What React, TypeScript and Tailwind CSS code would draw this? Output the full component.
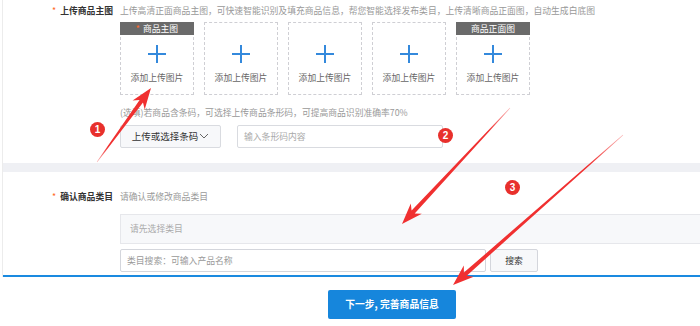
import React from "react";

type Pt = [number, number];

// build a tapered annotation arrow (thin tail, notched head)
function arrowPoints(tail: Pt, tip: Pt, headLen = 21, headHalf = 7.5, tailW = 0.6, neckW = 4.2) {
  const dx = tip[0] - tail[0];
  const dy = tip[1] - tail[1];
  const len = Math.hypot(dx, dy);
  const ux = dx / len;
  const uy = dy / len;
  const nx = -uy;
  const ny = ux;
  const bx = tip[0] - ux * headLen;
  const by = tip[1] - uy * headLen;
  const neckX = tip[0] - ux * headLen * 0.78;
  const neckY = tip[1] - uy * headLen * 0.78;
  const pts: Pt[] = [
    [tail[0] + (nx * tailW) / 2, tail[1] + (ny * tailW) / 2],
    [neckX + (nx * neckW) / 2, neckY + (ny * neckW) / 2],
    [bx + nx * headHalf, by + ny * headHalf],
    tip,
    [bx - nx * headHalf, by - ny * headHalf],
    [neckX - (nx * neckW) / 2, neckY - (ny * neckW) / 2],
    [tail[0] - (nx * tailW) / 2, tail[1] - (ny * tailW) / 2],
  ];
  return pts.map((p) => `${p[0].toFixed(1)},${p[1].toFixed(1)}`).join(" ");
}

const arrows: { id: string; tail: Pt; tip: Pt }[] = [
  { id: "a1", tail: [97, 162], tip: [151, 88] },
  { id: "a2", tail: [510, 108], tip: [402, 224] },
  { id: "a3", tail: [623, 135], tip: [453, 285] },
];

const badges = [
  { n: "1", cls: "left-[90px] top-[122px]" },
  { n: "2", cls: "left-[438px] top-[128px]" },
  { n: "3", cls: "left-[505px] top-[180px]" },
];

function Plus() {
  return (
    <svg width="20" height="20" viewBox="0 0 20 20">
      <path d="M10 1v18M1 10h18" stroke="#3489dc" strokeWidth="2" fill="none" />
    </svg>
  );
}

function UploadBox({ header, required }: { header?: string; required?: boolean }) {
  return (
    <div className="w-[74px] h-[73px] border border-dashed border-[#cfcfd4] flex flex-col items-center">
      <div className="h-[13px] w-[calc(100%+2px)] -mx-px -mt-px flex items-center justify-center">
        {header && (
          <div className="w-full h-[13px] bg-[#6a6a6a] text-white text-[8.8px] leading-[13px] text-center">
            {required && <span className="text-[#ff6a2a] mr-[3px]">*</span>}
            {header}
          </div>
        )}
      </div>
      <div className="mt-[9px]">
        <Plus />
      </div>
      <div className="mt-[8px] text-[8.8px] leading-[12px] text-[#666]">添加上传图片</div>
    </div>
  );
}

function Label({ children }: { children: React.ReactNode }) {
  return (
    <div className="w-[117px] shrink-0 text-right pr-[7px] text-[8.8px] leading-[13px] font-bold text-[#333]">
      <span className="text-[#ff6a2a] mr-[4px] font-normal">*</span>
      {children}
    </div>
  );
}

export default function App() {
  return (
    <div
      className="relative w-[700px] h-[326px] overflow-hidden bg-white"
      style={{ fontFamily: '"Noto Sans CJK SC", "Noto Sans", sans-serif' }}
    >
      <div className="ml-[2px] border-l border-[#ececec]">
        {/* upload section */}
        <div className="pt-[4px] pb-[15px]">
          <div className="flex">
            <Label>上传商品主图</Label>
            <div className="flex-1">
              <p className="text-[8.8px] leading-[13px] text-[#999] whitespace-nowrap">
                上传高清正面商品主图，可快速智能识别及填充商品信息，帮您智能选择发布类目，上传清晰商品正面图，自动生成白底图
              </p>
              <div className="mt-[5px] flex gap-[10px]">
                <UploadBox header="商品主图" required />
                <UploadBox />
                <UploadBox />
                <UploadBox />
                <UploadBox header="商品正面图" />
              </div>
              <p className="mt-[11px] text-[8.8px] leading-[13px] text-[#999] whitespace-nowrap">
                (选填)若商品含条码，可选择上传商品条形码，可提高商品识别准确率70%
              </p>
              <div className="mt-[6px] flex gap-[16px]">
                <button className="w-[101px] h-[23px] bg-[#f7f8fa] border border-[#d9dbe0] rounded-[2px] text-[9.5px] text-[#333] flex items-center justify-center">
                  上传或选择条码
                  <svg width="10" height="7" viewBox="0 0 10 7" className="ml-[1px]">
                    <path d="M1 1l4 4 4-4" stroke="#666" strokeWidth="1" fill="none" />
                  </svg>
                </button>
                <div className="w-[206px] h-[23px] border border-[#d9dbe0] rounded-[2px] flex items-center px-[6px] text-[8.8px] text-[#aaa]">
                  输入条形码内容
                </div>
              </div>
            </div>
          </div>
        </div>

        <div className="h-[9px] bg-[#eff0f4]" />

        {/* category section */}
        <div className="pt-[18px]">
          <div className="flex">
            <Label>确认商品类目</Label>
            <div className="flex-1">
              <p className="text-[8.8px] leading-[13px] text-[#999]">请确认或修改商品类目</p>
              <div className="mt-[11px] h-[30px] bg-[#f7f8fa] border border-r-0 border-[#e6e7eb] flex items-center pl-[9px] text-[8.8px] text-[#aaa]">
                请先选择类目
              </div>
              <div className="mt-[5px] flex gap-[4px]">
                <div className="w-[366px] h-[23px] border border-[#d4d6dc] rounded-[2px] flex items-center px-[6px] text-[8.8px] text-[#999]">
                  类目搜索：可输入产品名称
                </div>
                <button className="w-[48px] h-[23px] bg-[#f7f8fa] border border-[#d4d6dc] rounded-[2px] text-[8.8px] text-[#333]">
                  搜索
                </button>
              </div>
            </div>
          </div>
          <div className="mt-[3px] h-[2px] bg-[#1a8ae0]" />
        </div>
      </div>

      <div className="pt-[12px] pl-[328px]">
        <button className="w-[128px] h-[29px] bg-[#1686dc] rounded-[2px] text-white text-[9.8px] font-bold">
          下一步, 完善商品信息
        </button>
      </div>

      {/* annotations */}
      <svg className="absolute inset-0 pointer-events-none" width="700" height="326">
        <defs>
          {arrows.map((a) => (
            <linearGradient
              key={a.id}
              id={`g-${a.id}`}
              gradientUnits="userSpaceOnUse"
              x1={a.tail[0]}
              y1={a.tail[1]}
              x2={a.tip[0]}
              y2={a.tip[1]}
            >
              <stop offset="0" stopColor="#f03030" stopOpacity="0.35" />
              <stop offset="0.2" stopColor="#f03030" stopOpacity="1" />
              <stop offset="1" stopColor="#f03030" stopOpacity="1" />
            </linearGradient>
          ))}
        </defs>
        {arrows.map((a) => (
          <polygon key={a.id} points={arrowPoints(a.tail, a.tip)} fill={`url(#g-${a.id})`} />
        ))}
      </svg>
      {badges.map((b) => (
        <div
          key={b.n}
          className={`absolute ${b.cls} w-[15px] h-[15px] rounded-full bg-[#e8302c] text-white text-[10px] font-bold flex items-center justify-center`}
          style={{ fontFamily: '"Liberation Sans", sans-serif' }}
        >
          {b.n}
        </div>
      ))}
    </div>
  );
}
